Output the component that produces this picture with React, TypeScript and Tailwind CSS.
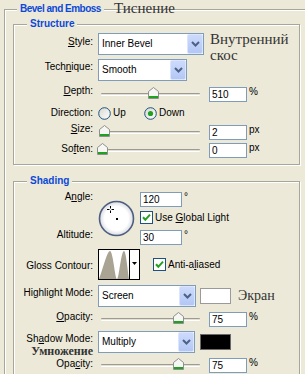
import React from "react";

function U({ children }: { children: React.ReactNode }) {
  return <span className="underline underline-offset-[1px]">{children}</span>;
}

function Label({ children, cls = "mb-[5px]", lh = "leading-[12px]" }: { children: React.ReactNode; cls?: string; lh?: string }) {
  return <div className={`w-[79px] shrink-0 text-right whitespace-nowrap ${lh} ${cls}`}>{children}</div>;
}

function Chevron() {
  return (
    <svg width="9" height="6" viewBox="0 0 9 6">
      <path d="M1 1 L4.5 4.5 L8 1" stroke="#4d6185" strokeWidth="2" fill="none" />
    </svg>
  );
}

function Select({ value, w }: { value: string; w: string }) {
  return (
    <div className={`${w} h-[22px] shrink-0 border border-[#7f9db9] bg-white flex items-center`}>
      <span className="flex-1 pl-[3px] leading-[12px]">{value}</span>
      <div className="w-[16px] h-[20px] rounded-[2px] bg-gradient-to-b from-[#cddafd] to-[#b3c7f5] border border-[#dbe5fd] flex items-center justify-center">
        <Chevron />
      </div>
    </div>
  );
}

function Thumb({ pos }: { pos: number }) {
  return (
    <svg width="11" height="12" viewBox="0 0 11 12" className="absolute top-[1px]" style={{ left: pos }}>
      <path d="M0.5 4.5 L5.5 0.5 L10.5 4.5 V11.5 H0.5 Z" fill="#f6f6f2" stroke="#8e8f8f" />
      <rect x="1" y="9" width="9" height="2" fill="#21a121" />
    </svg>
  );
}

function Slider({ pos }: { pos: number }) {
  return (
    <div className="relative ml-[8px] w-[99px] h-[16px] shrink-0">
      <div className="absolute left-0 right-0 top-[7px] h-[3px] rounded-[1px] border-t border-[#9d9b90] bg-[#e2e0d6] border-b border-b-white" />
      <Thumb pos={pos} />
    </div>
  );
}

function Input({ value, w = "w-[38px]" }: { value: string; w?: string }) {
  return (
    <div className={`${w} h-[15px] shrink-0 border border-[#7f9db9] bg-white pl-[2px] leading-[13px]`}>{value}</div>
  );
}

function Radio({ on }: { on?: boolean }) {
  return (
    <svg width="13" height="13" viewBox="0 0 13 13" className="shrink-0">
      <defs>
        <linearGradient id="rg" x1="0" y1="0" x2="1" y2="1">
          <stop offset="0" stopColor="#d8d8d0" />
          <stop offset="1" stopColor="#ffffff" />
        </linearGradient>
      </defs>
      <circle cx="6.5" cy="6.5" r="5.8" fill="url(#rg)" stroke="#1c5180" strokeWidth="1" />
      {on && <circle cx="6.5" cy="6.5" r="2.6" fill="#21a121" />}
    </svg>
  );
}

function Check() {
  return (
    <svg width="13" height="13" viewBox="0 0 13 13" className="shrink-0">
      <rect x="0.5" y="0.5" width="12" height="12" fill="#fff" stroke="#1c5180" />
      <path d="M3 6.3 L5.3 8.8 L10 3.6" stroke="#21a121" strokeWidth="2" fill="none" />
    </svg>
  );
}

function Group({ title, children, className = "" }: { title: string; children: React.ReactNode; className?: string }) {
  return (
    <div className={`relative w-[287px] border border-[#a7a69a] shadow-[inset_1px_1px_0_#fff,1px_1px_0_#fff] ${className}`}>
      <div className="absolute left-[13px] top-[-7px] px-[3px] bg-[#ece9d8] font-bold text-[#0b48d8] leading-[12px]">{title}</div>
      {children}
    </div>
  );
}

const serif = "font-['Liberation_Serif','DejaVu_Serif',serif]";

export default function App() {
  return (
    <div className="w-[305px] h-[374px] overflow-hidden bg-[#ece9d8] pl-[4px] pt-[9px] text-[10px] text-black font-['Liberation_Sans',Arial,sans-serif]">
      <div className="relative w-[320px] h-[400px] border-l border-t border-[#a7a69a] shadow-[inset_1px_1px_0_#fff] pl-[8px] pt-[14px]">
        <div className="absolute left-[12px] top-[-7px] px-[3px] bg-[#ece9d8] font-bold text-[#0b48d8] leading-[12px] tracking-[-0.5px]">
          Bevel and Emboss
        </div>
        <div className={`absolute left-[109px] top-[-10px] ${serif} text-[15px] leading-[16px] text-[#333]`}>Тиснение</div>

        <Group title="Structure">
          <div className="pt-[8px] pb-[6px]">
            <div className="flex items-center h-[22px]">
              <Label cls="mb-[4px]">
                <U>S</U>tyle:
              </Label>
              <div className="ml-[5px]">
                <Select w="w-[106px]" value="Inner Bevel" />
              </div>
              <div className={`ml-[6px] self-start mt-[-2px] ${serif} text-[15px] leading-[16px] text-[#333]`}>
                Внутренний
                <br />
                скос
              </div>
            </div>
            <div className="flex items-center h-[22px] mt-[4px]">
              <Label cls="mb-[6px]">
                Tech<U>n</U>ique:
              </Label>
              <div className="ml-[5px]">
                <Select w="w-[89px]" value="Smooth" />
              </div>
            </div>
            <div className="flex items-center h-[16px] mt-[5px]">
              <Label cls="mb-[6px]">
                <U>D</U>epth:
              </Label>
              <Slider pos={47} />
              <div className="ml-[9px]">
                <Input value="510" />
              </div>
              <div className="ml-[2px] self-start mt-[1px] leading-[10px]">%</div>
            </div>
            <div className="flex items-center h-[16px] mt-[3px]">
              <Label cls="mb-0">Direction:</Label>
              <div className="ml-[5px] flex items-center w-[46px]">
                <Radio />
                <span className="ml-[2px] leading-[12px]">Up</span>
              </div>
              <div className="flex items-center">
                <Radio on />
                <span className="ml-[2px] leading-[12px]">Down</span>
              </div>
            </div>
            <div className="flex items-center h-[16px] mt-[3px]">
              <Label cls="mb-[6px]">
                <U>S</U>ize:
              </Label>
              <Slider pos={-2} />
              <div className="ml-[9px]">
                <Input value="2" />
              </div>
              <div className="ml-[2px] self-start mt-[1px] leading-[10px]">px</div>
            </div>
            <div className="flex items-center h-[16px] mt-[2px]">
              <Label cls="mb-[2px]">
                So<U>f</U>ten:
              </Label>
              <Slider pos={-4} />
              <div className="ml-[9px]">
                <Input value="0" />
              </div>
              <div className="ml-[2px] self-start mt-[1px] leading-[10px]">px</div>
            </div>
          </div>
        </Group>

        <Group title="Shading" className="mt-[16px]">
          <div className="pt-[10px] pb-[20px]">
            <div className="flex h-[54px]">
              <div className="w-[79px] shrink-0 flex flex-col items-end leading-[12px]">
                <div className="mt-[-1px]">
                  A<U>n</U>gle:
                </div>
                <div className="mt-[26px]">Altitude:</div>
              </div>
              <svg width="37" height="37" viewBox="0 0 37 37" className="ml-[5px] mt-[8px] shrink-0">
                <defs>
                  <radialGradient id="cg" cx="0.5" cy="0.5" r="0.5">
                    <stop offset="0.7" stopColor="#ffffff" />
                    <stop offset="1" stopColor="#d8dae0" />
                  </radialGradient>
                </defs>
                <circle cx="18.5" cy="18.5" r="17" fill="url(#cg)" stroke="#4e5d80" strokeWidth="1.6" />
                <path d="M12.5 6 V8.5 M12.5 10.5 V13 M9 9.5 H11.5 M13.5 9.5 H16" stroke="#000" strokeWidth="1" />
                <rect x="18" y="18" width="2" height="2" fill="#000" />
              </svg>
              <div className="ml-[5px] flex flex-col">
                <div className="flex items-start">
                  <Input value="120" w="w-[42px]" />
                  <span className="ml-[2px] leading-[10px]">°</span>
                </div>
                <div className="flex items-center mt-[4px] h-[13px]">
                  <Check />
                  <span className="ml-[2px] leading-[12px]">
                    Use <U>G</U>lobal Light
                  </span>
                </div>
                <div className="flex items-start mt-[6px]">
                  <Input value="30" w="w-[42px]" />
                  <span className="ml-[2px] leading-[10px]">°</span>
                </div>
              </div>
            </div>

            <div className="flex items-center h-[31px] mt-[3px]">
              <Label cls="mt-[3px]">Gloss Contour:</Label>
              <svg width="42" height="31" viewBox="0 0 42 31" className="ml-[5px] shrink-0">
                <rect x="0.5" y="0.5" width="41" height="30" fill="#fff" stroke="#000" />
                <path d="M1 30 C5 20 9 2 12 2 C15 2 17 30 19 30 C21 30 23 2 26 2 C28 2 29.5 20 31 30 Z" fill="#a8a392" />
                <line x1="31.5" y1="0" x2="31.5" y2="31" stroke="#000" />
                <path d="M34 13 H39 L36.5 16 Z" fill="#000" />
              </svg>
              <div className="ml-[13px] flex items-center">
                <Check />
                <span className="ml-[2px] leading-[12px]">
                  Anti-a<U>l</U>iased
                </span>
              </div>
            </div>

            <div className="flex items-center h-[22px] mt-[5px]">
              <Label cls="mb-[6px]">Highlight Mode:</Label>
              <div className="ml-[5px]">
                <Select w="w-[98px]" value="Screen" />
              </div>
              <div className="ml-[4px] w-[31px] h-[16px] bg-white border border-[#9a9a9a] shrink-0" />
              <div className={`ml-[7px] ${serif} text-[14px] leading-[16px] text-[#333]`}>Экран</div>
            </div>

            <div className="flex items-center h-[16px] mt-[4px]">
              <Label cls="mb-[4px]">
                <U>O</U>pacity:
              </Label>
              <Slider pos={72} />
              <div className="ml-[9px]">
                <Input value="75" />
              </div>
              <div className="ml-[2px] self-start mt-[1px] leading-[10px]">%</div>
            </div>

            <div className="flex items-start h-[22px] mt-[4px]">
              <div className="w-[79px] shrink-0 flex flex-col items-end pt-[2px]">
                <div className="leading-[11px] whitespace-nowrap">
                  Sh<U>a</U>dow Mode:
                </div>
                <div className={`mt-[2px] ${serif} font-bold text-[12px] leading-[11px] text-[#333] whitespace-nowrap`}>Умножение</div>
              </div>
              <div className="ml-[5px]">
                <Select w="w-[97px]" value="Multiply" />
              </div>
              <div className="ml-[5px] mt-[3px] w-[31px] h-[16px] bg-black border border-[#6a6a6a] shrink-0" />
            </div>

            <div className="flex items-center h-[16px] mt-[4px]">
              <Label cls="mb-[3px]" lh="leading-[11px]">
                Opa<U>c</U>ity:
              </Label>
              <Slider pos={72} />
              <div className="ml-[9px]">
                <Input value="75" />
              </div>
              <div className="ml-[2px] self-start mt-[1px] leading-[10px]">%</div>
            </div>
          </div>
        </Group>
      </div>
    </div>
  );
}
